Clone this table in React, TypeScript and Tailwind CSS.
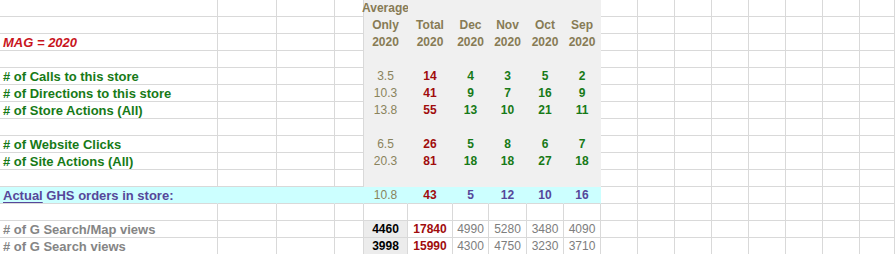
type Cell = { t: string; k: string };

const olive = "font-bold text-[#877b55]";
const avg = "font-normal text-[#8a835c]";
const red = "font-bold text-[#a00c0c]";
const green = "font-bold text-[#177a17]";
const purple = "font-bold text-[#56479a]";
const grey = "font-normal text-[#7d7d7d]";
const greyLabel = "font-bold text-[#858585]";
const black = "font-bold text-black";

const c = (t: string, k: string): Cell => ({ t, k });

const vals = (a: string, tot: string, rest: string[], k: string, ak = avg, tk = red): Cell[] => [
  c(a, ak),
  c(tot, tk),
  ...rest.map((r) => c(r, k)),
];

const rows: { label?: string; lk?: string; cells?: Cell[] }[] = [
  { cells: [c("Average", olive)] },
  { cells: ["Only", "Total", "Dec", "Nov", "Oct", "Sep"].map((t) => c(t, olive)) },
  { label: "MAG = 2020", lk: "font-bold italic text-[#c8141c]", cells: Array(6).fill(c("2020", olive)) },
  {},
  { label: "# of Calls to this store", lk: green, cells: vals("3.5", "14", ["4", "3", "5", "2"], green) },
  { label: "# of Directions to this store", lk: green, cells: vals("10.3", "41", ["9", "7", "16", "9"], green) },
  { label: "# of Store Actions (All)", lk: green, cells: vals("13.8", "55", ["13", "10", "21", "11"], green) },
  {},
  { label: "# of Website Clicks", lk: green, cells: vals("6.5", "26", ["5", "8", "6", "7"], green) },
  { label: "# of Site Actions (All)", lk: green, cells: vals("20.3", "81", ["18", "18", "27", "18"], green) },
  {},
  { label: "actual", cells: vals("10.8", "43", ["5", "12", "10", "16"], purple) },
  {},
  { label: "# of G Search/Map views", lk: greyLabel, cells: vals("4460", "17840", ["4990", "5280", "3480", "4090"], grey, black) },
  { label: "# of G Search views", lk: greyLabel, cells: vals("3998", "15990", ["4300", "4750", "3230", "3710"], grey, black) },
];

const line = "border-[#d9d9d9]";

export default function App() {
  return (
    <div className="h-[254px] w-[895px] overflow-hidden bg-white font-['Liberation_Sans',Arial,sans-serif] text-[12px]">
      <div className="grid grid-cols-[218px_59px_58px_29px_44px_45px_36px_38px_37px_37px_37px_37px_37px_37px_37px_37px_37px_35px] auto-rows-[17px]">
        {rows.map((row, r) => {
          const cyan = r === 11;
          const shaded = r <= 10;
          const out = [];
          for (let col = 0; col < 18; col++) {
            let bg = `bg-white border-r border-b ${line}`;
            if (cyan && col < 10) bg = `bg-[#ccffff] border-r border-b border-r-[#ccffff] border-b-[#d9d9d9]`;
            else if (shaded && col >= 4 && col < 10) bg = "bg-[#f0f0f0] border-r border-b border-[#f0f0f0]";
            else if (r >= 13 && col === 4) bg = `bg-[#ececec] border-r border-b ${line}`;

            let content = null;
            if (col === 0 && row.label) {
              content =
                row.label === "actual" ? (
                  <span className="whitespace-nowrap pl-[3px] text-[13px] font-bold text-[#56479a]">
                    <span className="underline underline-offset-2">Actual</span> GHS orders in store:
                  </span>
                ) : (
                  <span className={`whitespace-nowrap pl-[3px] text-[13px] ${row.lk}`}>{row.label}</span>
                );
            }
            if (col >= 4 && col < 10 && row.cells && row.cells[col - 4]) {
              const cell = row.cells[col - 4];
              content = <span className={`whitespace-nowrap ${cell.k}`}>{cell.t}</span>;
            }
            out.push(
              <div
                key={col}
                className={`relative flex items-center pt-[1px] leading-[15px] ${col === 0 ? "justify-start" : "justify-center"} ${bg}`}
              >
                {content}
              </div>
            );
          }
          return out;
        })}
      </div>
    </div>
  );
}
